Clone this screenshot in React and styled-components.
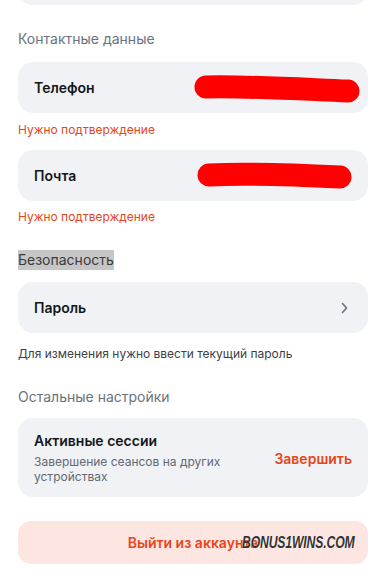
import React from "react";
import styled, { createGlobalStyle } from "styled-components";

const Global = createGlobalStyle`
  html, body { margin: 0; padding: 0; background: #ffffff; }
  body { font-family: Inter, "Noto Sans", "Liberation Sans", sans-serif; overflow: hidden; }
  * { box-sizing: border-box; }
`;

const Page = styled.div`
  width: 384px;
  height: 573px;
  overflow: hidden;
  padding: 0 16px 0 18px;
  display: flex;
  flex-direction: column;
`;

const Card = styled.div`
  position: relative;
  background: #f1f2f6;
  border-radius: 15px;
  min-height: 51px;
  padding: ${(p) => (p.$tall ? "13px 16px 13px" : "0 16px")};
  display: flex;
  align-items: center;
  justify-content: space-between;
  gap: 16px;
  margin-top: ${(p) => p.$mt || 0}px;
`;

const ClippedCard = styled(Card)`
  margin-top: -46px;
  flex: 0 0 51px;
`;

const SectionTitle = styled.div`
  font-size: 14px;
  line-height: 20px;
  margin-top: ${(p) => p.$mt}px;
  align-self: flex-start;
  background: ${(p) => (p.$selected ? "#c6c6c6" : "transparent")};
  color: ${(p) => (p.$selected ? "#3a3a3a" : "#6b727c")};
`;

const Hint = styled.div`
  font-size: 12px;
  line-height: 16px;
  margin-top: ${(p) => p.$mt}px;
  color: ${(p) => (p.$warn ? "#e5461b" : "#3b3f45")};
`;

const Label = styled.div`
  font-size: 14px;
  font-weight: 600;
  color: #15171a;
  line-height: 20px;
`;

const Column = styled.div`
  flex: 1;
  display: flex;
  flex-direction: column;
  gap: 3px;
`;

const Sub = styled.div`
  font-size: 12px;
  line-height: 15px;
  color: #626872;
  max-width: 200px;
`;

const ActionLink = styled.button`
  border: 0;
  background: none;
  padding: 0;
  font-family: inherit;
  font-size: 14px;
  font-weight: 600;
  color: #e5461b;
  white-space: nowrap;
  margin-top: 1px;
`;

const Chevron = styled.svg`
  width: 16px;
  height: 16px;
  flex: 0 0 16px;
`;

const Scribble = styled.svg`
  position: absolute;
  top: 0;
  left: 0;
  pointer-events: none;
`;

const Logout = styled.button`
  position: relative;
  margin-top: 24px;
  height: 43px;
  flex: 0 0 43px;
  border: 0;
  border-radius: 13px;
  background: #fde6e1;
  font-family: inherit;
  font-size: 14px;
  font-weight: 600;
  color: #e5461b;
  display: flex;
  align-items: center;
  justify-content: center;
  padding: 0;
`;

const Watermark = styled.span`
  position: absolute;
  left: 224px;
  top: 12px;
  font-family: "Liberation Sans", Arial, sans-serif;
  font-size: 16.5px;
  font-weight: 700;
  font-style: italic;
  color: #333333;
  letter-spacing: -0.2px;
  transform: scaleX(0.74);
  transform-origin: left center;
  text-shadow: 0 0 1px #ffffff;
  white-space: nowrap;
  line-height: 18px;
`;

function RedMark({ d }) {
  return (
    <Scribble width="350" height="51" viewBox="0 0 350 51">
      <path d={d} stroke="#ff0000" strokeWidth="23" strokeLinecap="round" fill="none" />
    </Scribble>
  );
}

export default function App() {
  return (
    <Page>
      <Global />
      <ClippedCard />
      <SectionTitle $mt={24}>Контактные данные</SectionTitle>

      <Card $mt={13}>
        <Label>Телефон</Label>
        <RedMark d="M188 25 C 230 24, 280 27, 330 29" />
      </Card>
      <Hint $warn $mt={9}>Нужно подтверждение</Hint>

      <Card $mt={12}>
        <Label>Почта</Label>
        <RedMark d="M191 25 C 230 23, 280 25, 322 27" />
      </Card>
      <Hint $warn $mt={8}>Нужно подтверждение</Hint>

      <SectionTitle $mt={25} $selected>Безопасность</SectionTitle>

      <Card $mt={12}>
        <Label>Пароль</Label>
        <Chevron viewBox="0 0 16 16" fill="none">
          <path d="M6.5 3.5 L10.5 8 L6.5 12.5" stroke="#6b7079" strokeWidth="1.6" strokeLinecap="round" strokeLinejoin="round" />
        </Chevron>
      </Card>
      <Hint $mt={13}>Для изменения нужно ввести текущий пароль</Hint>

      <SectionTitle $mt={25}>Остальные настройки</SectionTitle>

      <Card $tall $mt={11}>
        <Column>
          <Label>Активные сессии</Label>
          <Sub>Завершение сеансов на других устройствах</Sub>
        </Column>
        <ActionLink>Завершить</ActionLink>
      </Card>

      <Logout>
        Выйти из аккаунта
        <Watermark>BONUS1WINS.COM</Watermark>
      </Logout>
    </Page>
  );
}
